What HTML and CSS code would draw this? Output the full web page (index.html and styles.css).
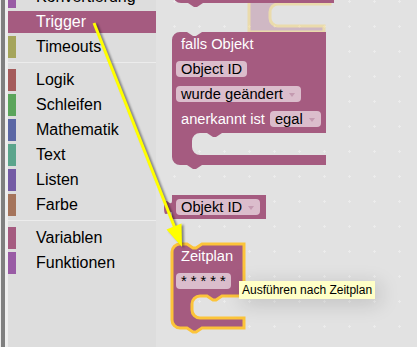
FILE: index.html
```html
<!DOCTYPE html>
<html lang="de">
<head>
<meta charset="utf-8">
<title>Blockly</title>
<link rel="stylesheet" href="styles.css">
</head>
<body>
<div class="screen">
  <div class="bezel"></div>
  <nav class="toolbox">
    <ul class="cats">
      <li class="cat"><span class="sw c-conv"></span><span class="name">Konvertierung</span></li>
      <li class="cat sel"><span class="sw c-trig"></span><span class="name">Trigger</span></li>
      <li class="cat"><span class="sw c-time"></span><span class="name">Timeouts</span></li>
      <li class="sep"></li>
      <li class="cat"><span class="sw c-logic"></span><span class="name">Logik</span></li>
      <li class="cat"><span class="sw c-loop"></span><span class="name">Schleifen</span></li>
      <li class="cat"><span class="sw c-math"></span><span class="name">Mathematik</span></li>
      <li class="cat"><span class="sw c-text"></span><span class="name">Text</span></li>
      <li class="cat"><span class="sw c-list"></span><span class="name">Listen</span></li>
      <li class="cat"><span class="sw c-colour"></span><span class="name">Farbe</span></li>
      <li class="sep"></li>
      <li class="cat"><span class="sw c-var"></span><span class="name">Variablen</span></li>
      <li class="cat"><span class="sw c-func"></span><span class="name">Funktionen</span></li>
    </ul>
  </nav>
  <main class="workspace">
    <svg class="canvas" width="261" height="347" viewBox="156 0 261 347">
      <defs>
        <pattern id="grid" x="12" y="14" width="25" height="25" patternUnits="userSpaceOnUse">
          <rect x="11" y="12" width="3" height="1" fill="#ececec"/>
          <rect x="12" y="11" width="1" height="3" fill="#ececec"/>
        </pattern>
      </defs>
      <rect x="156" y="0" width="261" height="347" fill="url(#grid)"/>
      <g class="ghost">
        <path d="M249,-20 H330 V4 H278 a8,8 0 0 0 -8,8 V18 a8,8 0 0 0 8,8 H324 V32 H249 Z"/>
      </g>
      <path class="blk" d="M173,-30 H334 V3 H203 l-6,4 h-3 l-6,-4 H181 a8,8 0 0 1 -8,-8 Z"/>
      <path class="blk" d="M172,40 a8,8 0 0 1 8,-8 H187 l6,4 h3 l6,-4 H326 V133 H222 l-6,4 h-3 l-6,-4 H200 a8,8 0 0 0 -8,8 V147 a8,8 0 0 0 8,8 H326 V165 H202 l-6,4 h-3 l-6,-4 H180 a8,8 0 0 1 -8,-8 Z"/>
      <path class="blk" d="M172,195 H266 V219 H172 V215 c0,-10 -8,8 -8,-7.5 s8,2.5 8,-7.5 Z"/>
      <path class="blk selected" d="M172,252 a8,8 0 0 1 8,-8 H187 l6,4 h3 l6,-4 H244 V296 H222 l-6,4 h-3 l-6,-4 H200 a8,8 0 0 0 -8,8 V310 a8,8 0 0 0 8,8 H244 V328 H202 l-6,4 h-3 l-6,-4 H180 a8,8 0 0 1 -8,-8 Z"/>
    </svg>

    <div class="block b-falls">
      <div class="row"><span class="lbl">falls Objekt</span></div>
      <div class="row"><span class="fld">Object ID</span></div>
      <div class="row"><span class="fld dd">wurde geändert</span></div>
      <div class="row"><span class="lbl">anerkannt ist</span><span class="fld dd">egal</span></div>
    </div>

    <div class="block b-objid">
      <div class="row"><span class="fld dd">Objekt ID</span></div>
    </div>

    <div class="block b-zeit">
      <div class="row"><span class="lbl">Zeitplan</span></div>
      <div class="row"><span class="fld">* * * * *</span></div>
    </div>

    <div class="tooltip">Ausführen nach Zeitplan</div>
  </main>

  <svg class="arrow" width="417" height="347" viewBox="0 0 417 347">
    <g class="arrow-g">
      <line x1="94" y1="23" x2="174.5" y2="227" stroke="#ffff00" stroke-width="3"/>
      <polygon points="182,247 166.5,229.4 181.5,223.6" fill="#ffff00"/>
    </g>
  </svg>
</div>
</body>
</html>
```

FILE: styles.css
```css
* {
  box-sizing: border-box;
}

html,
body {
  margin: 0;
  padding: 0;
}

body {
  font-family: "Liberation Sans", Arial, sans-serif;
  background: #e2e2e2;
}

.screen {
  position: relative;
  display: flex;
  width: 417px;
  height: 347px;
  overflow: hidden;
}

/* left window edge */
.bezel {
  flex: none;
  width: 8px;
  background: #7f7f7f;
  border-left: 1px solid #ececec;
  border-right: 3px solid #eeeeee;
}

/* toolbox */
.toolbox {
  flex: none;
  width: 148px;
  background: #dddddd;
  overflow: hidden;
}

.cats {
  display: flex;
  flex-direction: column;
  list-style: none;
  margin: -14px 0 0;
  padding: 0;
}

.cat {
  display: flex;
  align-items: flex-start;
  height: 22px;
  margin-bottom: 3px;
}

.sw {
  flex: none;
  width: 8px;
  height: 22px;
}

.name {
  margin-left: 20px;
  font-size: 16px;
  line-height: 21px;
  color: #000;
  white-space: nowrap;
}

.cat.sel {
  background: #a55b80;
}

.cat.sel .name {
  color: #fff;
}

.sep {
  height: 1px;
  margin: 1px 0 6px;
  background: #ececec;
}

.c-conv { background: #995ba5; }
.c-trig { background: #a55b80; }
.c-time { background: #a5a55b; }
.c-logic { background: #a55b5b; }
.c-loop { background: #5ba55b; }
.c-math { background: #5b67a5; }
.c-text { background: #5ba58c; }
.c-list { background: #745ba5; }
.c-colour { background: #a5745b; }
.c-var { background: #a55b80; }
.c-func { background: #995ba5; }

/* workspace */
.workspace {
  position: relative;
  flex: 1;
  background: #e2e2e2;
}

.canvas {
  position: absolute;
  left: 0;
  top: 0;
}

.blk {
  fill: #a55b80;
}

.blk.selected {
  stroke: #fcc43a;
  stroke-width: 3px;
}

.ghost {
  opacity: 0.3;
}

.ghost path {
  fill: #a55b80;
  stroke: #ffcc33;
  stroke-width: 3px;
}

.block {
  position: absolute;
  left: 20px;
  display: flex;
  flex-direction: column;
  gap: 9px;
}

.b-falls { top: 36px; }
.b-objid { top: 199px; }
.b-zeit { top: 248px; }

.row {
  display: flex;
  align-items: center;
  height: 16px;
}

.lbl {
  padding: 0 5px;
  color: #fff;
  font-size: 11pt;
  line-height: 16px;
  white-space: nowrap;
}

.fld {
  display: flex;
  align-items: center;
  height: 16px;
  padding: 0 5px;
  border-radius: 4px;
  background: #dbbdcc;
  color: #000;
  font-size: 11pt;
  line-height: 16px;
  white-space: nowrap;
}

.fld.dd {
  padding-right: 6px;
}

.fld.dd::after {
  content: "";
  margin-left: 6px;
  margin-top: 1px;
  border-left: 3px solid transparent;
  border-right: 3px solid transparent;
  border-top: 4px solid #c49ab0;
}

/* tooltip */
.tooltip {
  position: absolute;
  left: 83px;
  top: 281px;
  padding: 2px 3px;
  background: #ffffc7;
  color: #000;
  font-size: 12px;
  line-height: 14px;
  white-space: nowrap;
  box-shadow: 4px 4px 20px 1px rgba(0, 0, 0, 0.15);
}

/* annotation arrow */
.arrow {
  position: absolute;
  left: 0;
  top: 0;
  pointer-events: none;
}

.arrow-g {
  filter: drop-shadow(2px 1px 1px rgba(0, 0, 0, 0.45));
}
```
